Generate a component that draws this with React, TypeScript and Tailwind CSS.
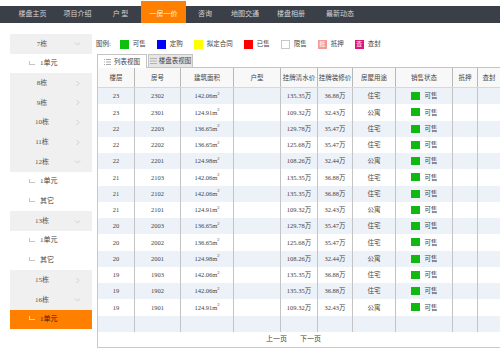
const navItems = [
  { label: '楼盘主页', w: 'w-[45px]', active: false },
  { label: '项目介绍', w: 'w-[45px]', active: false },
  { label: '户 型', w: 'w-[41px]', active: false },
  { label: '一房一价', w: 'w-[45px]', active: true },
  { label: '咨询', w: 'w-[38px]', active: false },
  { label: '地图交通', w: 'w-[42px]', active: false },
  { label: '楼盘相册', w: 'w-[50px]', active: false },
  { label: '最新动态', w: 'w-[48px]', active: false },
]

type SideItem = { text: string; unit?: boolean; open?: boolean; active?: boolean }

const sideItems: SideItem[] = [
  { text: '7栋', open: true },
  { text: '1单元', unit: true },
  { text: '8栋' },
  { text: '9栋' },
  { text: '10栋' },
  { text: '11栋' },
  { text: '12栋', open: true },
  { text: '1单元', unit: true },
  { text: '其它', unit: true },
  { text: '13栋', open: true },
  { text: '1单元', unit: true },
  { text: '其它', unit: true },
  { text: '15栋' },
  { text: '16栋', open: true },
  { text: '1单元', unit: true, active: true },
]

const legend = [
  { label: '可售', box: 'bg-[#0fbf0f]', mark: '' },
  { label: '定购', box: 'bg-[#0000ff]', mark: '' },
  { label: '拟定合同', box: 'bg-[#ffff00]', mark: '' },
  { label: '已售', box: 'bg-[#ff0000]', mark: '' },
  { label: '限售', box: 'bg-white border border-[#c8c8c8]', mark: '' },
  { label: '抵押', box: 'bg-[#f29a9a]', mark: '抵' },
  { label: '查封', box: 'bg-[#e2127a]', mark: '查' },
]

// floor, room, area, clean price, decoration price, usage
const rows = [
  ['23', '2302', '142.06', '135.35', '36.88', '住宅'],
  ['23', '2301', '124.91', '109.32', '32.43', '公寓'],
  ['22', '2203', '136.65', '129.78', '35.47', '住宅'],
  ['22', '2202', '136.65', '125.68', '35.47', '住宅'],
  ['22', '2201', '124.98', '108.26', '32.44', '公寓'],
  ['21', '2103', '142.06', '135.35', '36.88', '住宅'],
  ['21', '2102', '142.06', '135.35', '36.88', '住宅'],
  ['21', '2101', '124.91', '109.32', '32.43', '公寓'],
  ['20', '2003', '136.65', '129.78', '35.47', '住宅'],
  ['20', '2002', '136.65', '125.68', '35.47', '住宅'],
  ['20', '2001', '124.98', '108.26', '32.44', '公寓'],
  ['19', '1903', '142.06', '135.35', '36.88', '住宅'],
  ['19', '1902', '142.06', '135.35', '36.88', '住宅'],
  ['19', '1901', '124.91', '109.32', '32.43', '公寓'],
]

const cols = ['w-[37px]', 'w-[46px]', 'w-[53px]', 'w-[47px]', 'w-[37px]', 'w-[35px]', 'w-[43px]', 'w-[57px]', 'w-[25px]', 'w-[23px]']
const heads = ['楼层', '房号', '建筑面积', '户型', '挂牌清水价', '挂牌装修价', '房屋用途', '销售状态', '抵押', '查封']

const Chevron = ({ open }: { open?: boolean }) => (
  <svg width="7" height="7" viewBox="0 0 7 7" className="shrink-0">
    {open ? (
      <path d="M1 2.5 L3.5 5 L6 2.5" fill="none" stroke="#cfcfcf" strokeWidth="1" />
    ) : (
      <path d="M2.5 1 L5 3.5 L2.5 6" fill="none" stroke="#cfcfcf" strokeWidth="1" />
    )}
  </svg>
)

const Sidebar = () => (
  <div className="ml-[10px] mt-[11px] w-[82px] shrink-0 flex flex-col">
    {sideItems.map((item, i) =>
      item.unit ? (
        <div
          key={i}
          className={`h-[19.7px] flex items-center pl-[19px] gap-[5px] text-[7px] ${
            item.active ? 'bg-[#ff7f00] text-[#3a2000]' : 'bg-white text-[#444]'
          }`}
        >
          <span className={`inline-block w-[6px] h-[4px] -mt-[2px] border-l border-b ${item.active ? 'border-[#ffd0a0]' : 'border-[#c4c4c4]'}`} />
          <span>{item.text}</span>
        </div>
      ) : (
        <div key={i} className="h-[19.7px] flex items-center bg-[#f0f0f0] text-[7px] text-[#555]">
          <span className="w-[64px] text-center">{item.text}</span>
          <Chevron open={item.open} />
        </div>
      )
    )}
  </div>
)

const ListIcon = () => (
  <svg width="7" height="6" viewBox="0 0 7 6" className="shrink-0">
    <path d="M0 0.5h1M2 0.5h5M0 3h1M2 3h5M0 5.5h1M2 5.5h5" stroke="#aaa" strokeWidth="1" />
  </svg>
)

const GridIcon = () => (
  <svg width="7" height="6" viewBox="0 0 7 6" className="shrink-0">
    <path d="M0 0.5h7M0 3h7M0 5.5h7" stroke="#b4b4b4" strokeWidth="1" />
  </svg>
)

const Cell = ({ w, children, head }: { w: string; children?: React.ReactNode; head?: boolean }) => (
  <div
    className={`${w} shrink-0 h-full flex items-center justify-center border-r whitespace-nowrap overflow-hidden ${
      head ? 'border-[#b8b8b8]' : 'border-[#c4c4c4]'
    }`}
  >
    {children}
  </div>
)

const App = () => {
  return (
    <div className="w-[500px] h-[351px] overflow-hidden bg-white text-[#444] font-['Liberation_Serif','Noto_Sans_CJK_SC',serif]">
      <div className="h-[23px] pt-[6px]">
        <div className="h-[17px] bg-[#3b3f47] flex pl-[10px]">
          {navItems.map((n) => (
            <div
              key={n.label}
              className={`${n.w} shrink-0 flex items-center justify-center text-[7px] whitespace-pre ${
                n.active ? 'bg-[#ff8000] text-[#fff3e6] -mt-[5px] pt-[5px]' : 'text-[#d4d4d4]'
              }`}
            >
              {n.label}
            </div>
          ))}
        </div>
      </div>

      <div className="flex">
        <Sidebar />

        <div className="ml-[4px] pt-[16px] flex-1 min-w-0">
          <div className="h-[10px] flex items-center text-[6.5px] text-[#444]">
            <span className="mr-[9px]">图例:</span>
            {legend.map((l) => (
              <div key={l.label} className="flex items-center mr-[11px]">
                <span className={`w-[9px] h-[9px] flex items-center justify-center text-[6px] text-white ${l.box}`}>{l.mark}</span>
                <span className="ml-[4px]">{l.label}</span>
              </div>
            ))}
          </div>

          <div className="ml-[1px] mt-[5px] h-[14px] flex items-end border-b border-[#c4c4c4] text-[6.5px] whitespace-nowrap">
            <div className="w-[50px] h-[14px] -mb-px bg-white border border-b-0 border-[#c4c4c4] flex items-center justify-center gap-[3px]">
              <ListIcon />
              <span>列表视图</span>
            </div>
            <div className="ml-[1px] w-[45px] h-[13px] bg-[#e6e6e6] border border-b-0 border-[#c4c4c4] flex items-center justify-center gap-[2px]">
              <GridIcon />
              <span>楼盘表视图</span>
            </div>
          </div>

          <div className="ml-[1px] w-[403px] border-l border-b border-[#c8c8c8] text-[6.5px]">
            <div className="h-[20px] flex bg-[#f8f8f8] border-b border-[#d8d8d8] text-[#444]">
              {heads.map((h, i) => (
                <Cell key={h} w={cols[i]} head>
                  {h}
                </Cell>
              ))}
            </div>
            {rows.map((r, i) => (
              <div key={i} className={`h-[16.25px] flex ${i % 2 === 0 ? 'bg-[#edf2f9]' : 'bg-white'}`}>
                <Cell w={cols[0]}>{r[0]}</Cell>
                <Cell w={cols[1]}>{r[1]}</Cell>
                <Cell w={cols[2]}>
                  {r[2]}m<sup className="text-[4.5px]">2</sup>
                </Cell>
                <Cell w={cols[3]} />
                <Cell w={cols[4]}>{r[3]}万</Cell>
                <Cell w={cols[5]}>{r[4]}万</Cell>
                <Cell w={cols[6]}>{r[5]}</Cell>
                <Cell w={cols[7]}>
                  <span className="w-[9px] h-[8px] bg-[#11b811] mr-[5px]" />
                  <span>可售</span>
                </Cell>
                <Cell w={cols[8]} />
                <Cell w={cols[9]} />
              </div>
            ))}
            <div className="h-[16.25px] flex bg-[#edf2f9]">
              {cols.map((c, i) => (
                <Cell key={i} w={c} />
              ))}
            </div>
            <div className="h-[15px] flex items-center pl-[168px] gap-[13px] bg-white text-[7px]">
              <span>上一页</span>
              <span>下一页</span>
            </div>
          </div>
        </div>
      </div>
    </div>
  )
}

export default App
